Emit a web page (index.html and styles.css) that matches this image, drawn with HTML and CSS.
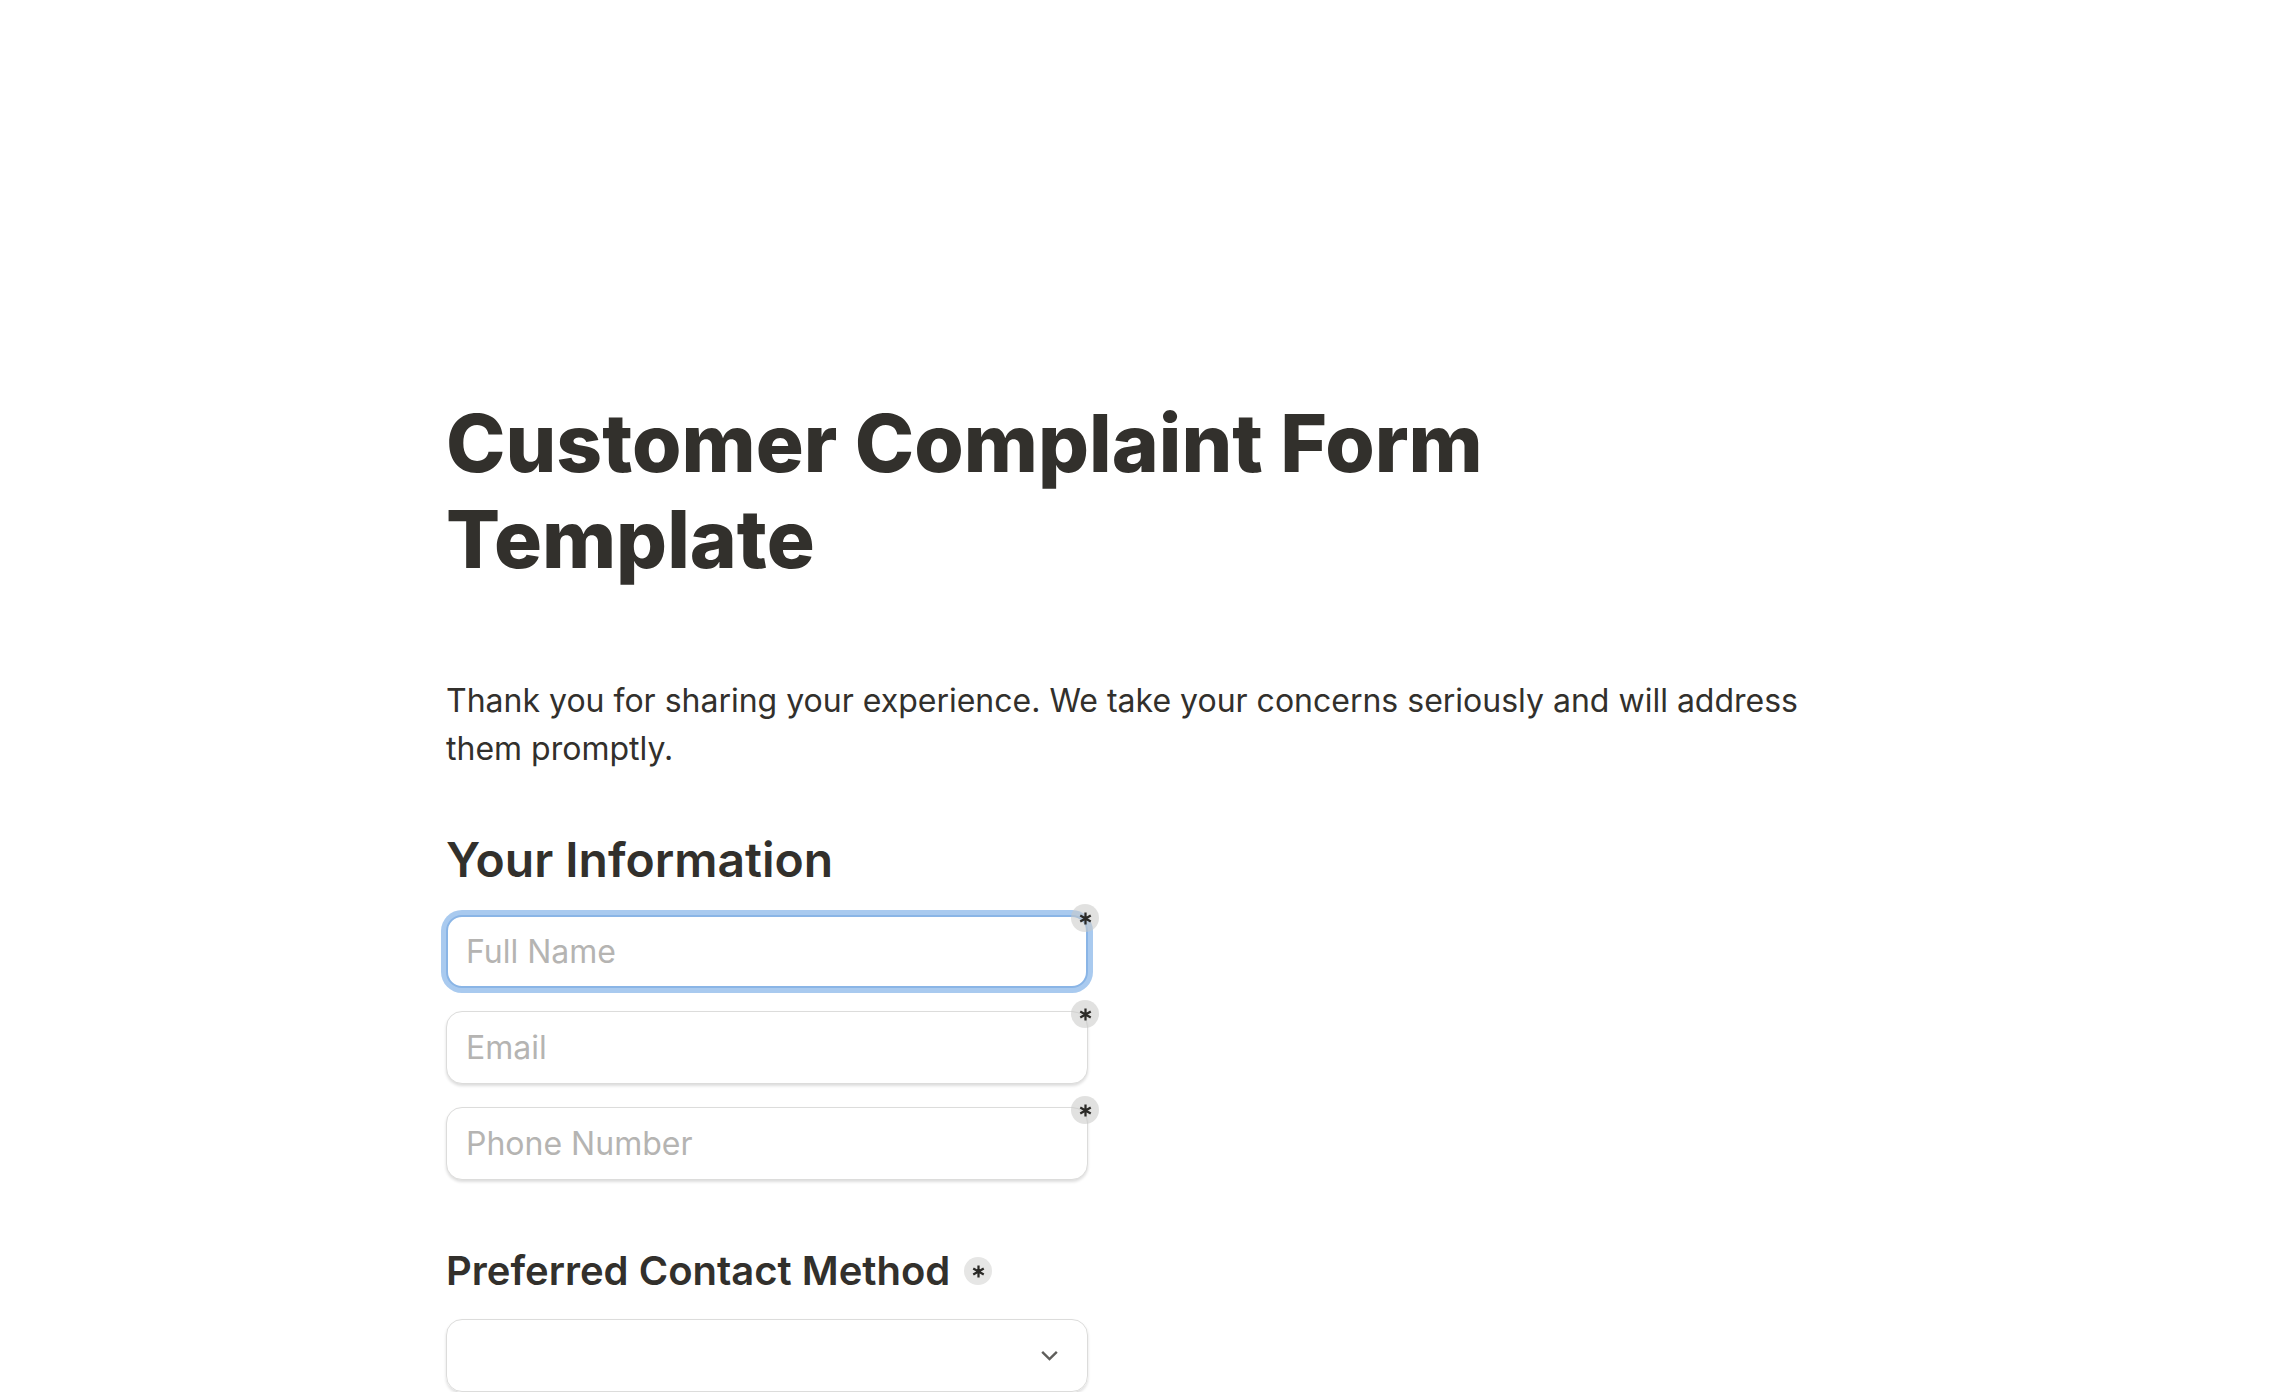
FILE: index.html
```html
<!DOCTYPE html>
<html lang="en">
<head>
  <meta charset="UTF-8" />
  <meta name="viewport" content="width=device-width, initial-scale=1.0"/>
  <title>Customer Complaint Form Template</title>
  <link rel="stylesheet" href="styles.css">
</head>
<body>
  <div class="form-page">
    <h1 class="form-title">Customer Complaint Form Template</h1>
    <p class="form-desc">Thank you for sharing your experience. We take your concerns seriously and will address them promptly.</p>

    <h2 class="section-title">Your Information</h2>
    <div class="field-list">
      <div class="field">
        <input type="text" class="text-input focused" placeholder="Full Name" />
        <span class="req-badge"><svg viewBox="0 0 16 16"><path d="M8 1.5v13M2.4 4.75l11.2 6.5M2.4 11.25l11.2-6.5"/></svg></span>
      </div>
      <div class="field">
        <input type="text" class="text-input" placeholder="Email" />
        <span class="req-badge"><svg viewBox="0 0 16 16"><path d="M8 1.5v13M2.4 4.75l11.2 6.5M2.4 11.25l11.2-6.5"/></svg></span>
      </div>
      <div class="field">
        <input type="text" class="text-input" placeholder="Phone Number" />
        <span class="req-badge"><svg viewBox="0 0 16 16"><path d="M8 1.5v13M2.4 4.75l11.2 6.5M2.4 11.25l11.2-6.5"/></svg></span>
      </div>
    </div>

    <h2 class="question-title">Preferred Contact Method
      <span class="req-inline"><svg viewBox="0 0 16 16"><path d="M8 1.5v13M2.4 4.75l11.2 6.5M2.4 11.25l11.2-6.5"/></svg></span>
    </h2>
    <div class="select-box">
      <svg class="chevron" viewBox="0 0 20 12"><path d="M2 2l8 8 8-8"/></svg>
    </div>
  </div>
</body>
</html>
```

FILE: styles.css
```css
body {
  margin: 0;
  background: #ffffff;
  color: #32302c;
  font-family: Inter, "Noto Sans", sans-serif;
}

.form-page {
  width: 1400px;
  margin: 0 auto;
  padding-top: 395px;
}

.form-title {
  margin: 0;
  font-size: 80px;
  line-height: 96px;
  font-weight: 800;
  width: 1200px;
}

.form-desc {
  margin: 90px 0 0;
  font-size: 32px;
  line-height: 48px;
}

.section-title {
  margin: 56px 0 0;
  font-size: 48px;
  line-height: 62px;
  font-weight: 600;
}

.field-list {
  margin-top: 24px;
  display: flex;
  flex-direction: column;
  gap: 23px;
}

.field {
  position: relative;
  width: 642px;
}

.text-input {
  box-sizing: border-box;
  width: 100%;
  height: 73px;
  padding: 0 19px;
  border: 1px solid #dcdcdb;
  border-radius: 16px;
  box-shadow: 0 2px 3px rgba(15, 15, 15, 0.14);
  font-family: Inter, "Noto Sans", sans-serif;
  font-size: 32px;
  color: #32302c;
  background: #fff;
  outline: none;
}

.text-input::placeholder {
  color: #b5b4b2;
}

.text-input.focused {
  border: 2px solid #8ab5e6;
  padding: 0 18px;
  box-shadow: 0 0 0 5px #a9caef;
}

.req-badge {
  position: absolute;
  top: -11px;
  right: -11px;
  width: 28px;
  height: 28px;
  border-radius: 50%;
  background: rgba(200, 200, 198, 0.55);
  display: flex;
  align-items: center;
  justify-content: center;
}

.req-badge svg,
.req-inline svg {
  width: 15px;
  height: 15px;
  fill: none;
  stroke: #2b2a27;
  stroke-width: 2.4;
}

.question-title {
  margin: 65px 0 0;
  font-size: 40px;
  line-height: 52px;
  font-weight: 600;
  display: flex;
  align-items: center;
  gap: 14px;
}

.req-inline {
  width: 28px;
  height: 28px;
  border-radius: 50%;
  background: #e6e6e5;
  display: flex;
  align-items: center;
  justify-content: center;
}

.select-box {
  box-sizing: border-box;
  margin-top: 22px;
  width: 642px;
  height: 73px;
  border: 1px solid #dcdcdb;
  border-radius: 16px;
  box-shadow: 0 2px 3px rgba(15, 15, 15, 0.14);
  display: flex;
  align-items: center;
  justify-content: flex-end;
  padding-right: 28px;
}

.chevron {
  width: 19px;
  height: 11px;
  fill: none;
  stroke: #5f5e5b;
  stroke-width: 2.6;
}
```
